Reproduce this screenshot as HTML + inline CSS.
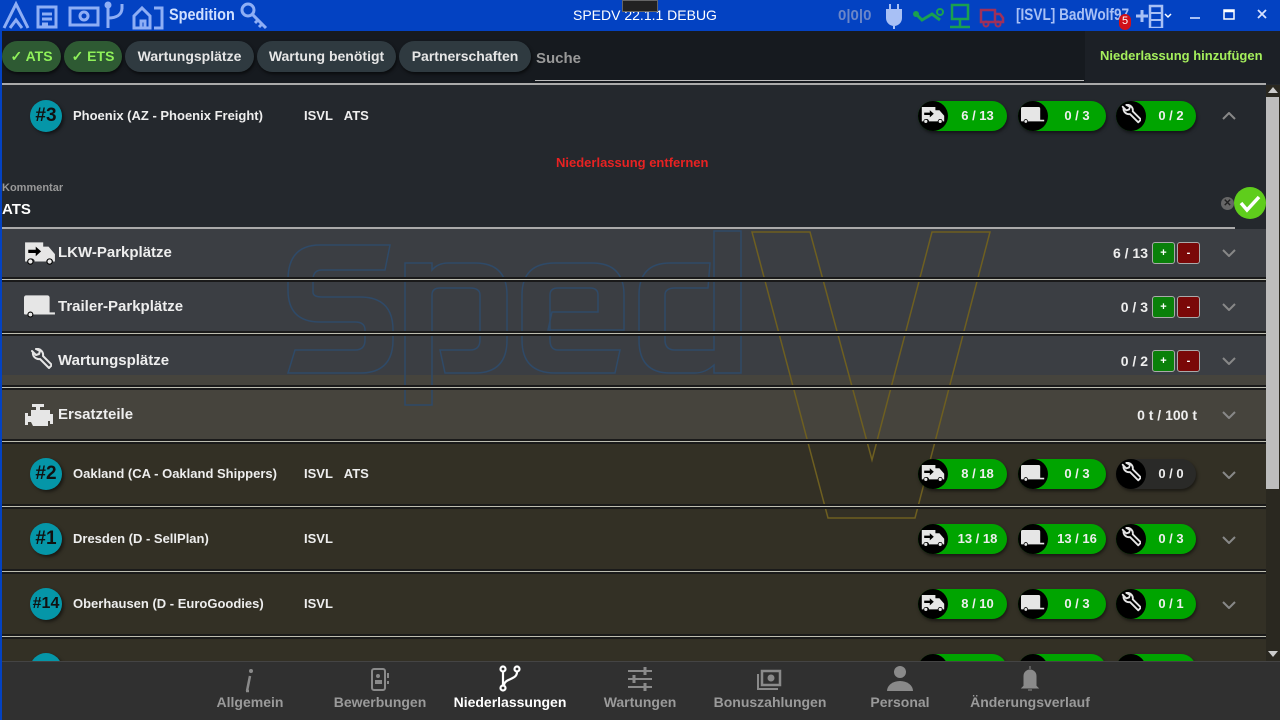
<!DOCTYPE html>
<html><head><meta charset="utf-8">
<style>
*{box-sizing:border-box;margin:0;padding:0}
body{width:1280px;height:720px;overflow:hidden;background:#23272c;font-family:"Liberation Sans",sans-serif;position:relative;color:#eee}
.a{position:absolute}
.t{font-weight:bold;white-space:nowrap}
.title{left:0;top:0;width:1280px;height:31px;background:#0342c2}
.chip{position:absolute;top:41px;height:31px;border-radius:16px;background:#2f3a40;color:#e6e6e6;font-weight:bold;font-size:14px;line-height:31px;text-align:center;box-shadow:1px 2px 3px rgba(0,0,0,.6)}
.chip.g{background:#2e5a33;color:#8ff05a}
.sep{position:absolute;left:0;width:1266px;height:5px;border-top:2px solid #1a1a1a;border-bottom:2px solid #1a1a1a;background:#bdbdb0}
.badge{position:absolute;left:30px;width:32px;height:32px;border-radius:50%;background:#0596a8;color:#111;font-size:19px;line-height:32px;text-align:center;box-shadow:2px 2px 3px rgba(0,0,0,.5)}
.name{position:absolute;left:73px;font-size:13px;font-weight:bold;color:#eee}
.tag{position:absolute;left:304px;font-size:13px;font-weight:bold;color:#eee;word-spacing:8px}
.pill{position:absolute;height:30px;border-radius:15px;background:#00a400;color:#eee;font-weight:bold;font-size:13px;line-height:30px;box-shadow:1px 2px 3px rgba(0,0,0,.5)}
.pill.dark{background:#2a2a28}
.pill .c{position:absolute;left:0;top:0;width:30px;height:30px;border-radius:50%;background:#000}
.pill .c svg{position:absolute;left:3px;top:4px}
.pill span{position:absolute;left:30px;right:0;text-align:center}
.chev{position:absolute;left:1222px;width:14px;height:8px}
.sub{position:absolute;left:58px;font-size:15px;font-weight:bold;color:#eee}
.val{position:absolute;right:132px;font-size:14px;font-weight:bold;color:#eee}
.btn{position:absolute;width:23px;height:22px;border:1px solid #aaa;border-radius:3px;font-size:11px;line-height:20px;text-align:center;color:#fff;font-weight:bold}
.nav{position:absolute;top:694px;font-size:14px;font-weight:bold;color:#9a9a9a;width:140px;text-align:center}
</style></head><body>
<svg width="0" height="0" style="position:absolute">
<defs>
<symbol id="truck" viewBox="0 0 30 22"><path d="M1 1h17v4h5l6 7v7h-2a3 3 0 0 0-6 0h-11a3 3 0 0 0-6 0h-3z" fill="#e6e6e6"/><circle cx="6" cy="19" r="2.5" fill="#e6e6e6" stroke="#000" stroke-width="1"/><circle cx="24" cy="19" r="2.5" fill="#e6e6e6" stroke="#000" stroke-width="1"/><path d="M4 8h7v-3l5 4.5-5 4.5v-3h-7z" fill="#000"/></symbol>
<symbol id="trailer" viewBox="0 0 30 22"><path d="M3 1h19a2 2 0 0 1 2 2v14h5v2h-21a2 2 0 0 0-4 0h-3a1 1 0 0 1-1-1v-15a2 2 0 0 1 2-2z" fill="#e6e6e6"/><circle cx="6" cy="19" r="2.3" fill="#e6e6e6" stroke="#000" stroke-width="1"/></symbol>
<symbol id="wrench" viewBox="0 0 24 24"><path d="M4 3l4 4 3-1 1-3-4-2a6 6 0 0 1 7 7l9 9-3 3-9-9a6 6 0 0 1-7-7z" fill="none" stroke="#e6e6e6" stroke-width="2" stroke-linejoin="round"/></symbol>
<symbol id="chev" viewBox="0 0 14 8"><path d="M1 1l6 6 6-6" fill="none" stroke="#888" stroke-width="2"/></symbol>
</defs></svg>

<!-- title bar -->
<div class="a title"></div>
<svg class="a" style="left:0;top:0" width="280" height="31">
<g fill="none" stroke="#8eaef5" stroke-width="3">
<path d="M4 28L16 4 28 28M10 28l6-8 6 8"/>
<rect x="38" y="7" width="18" height="20"/><path d="M42 14h10M42 19h10M42 24h6"/>
<rect x="70" y="8" width="28" height="17"/><circle cx="84" cy="16" r="4"/>
<path d="M108 4v24M108 18c8 0 14-3 14-10M122 4v5"/><circle cx="108" cy="5" r="2"/>
<path d="M134 28V16l8-8 8 8v12zM141 28v-7h4v7"/><path d="M154 8h8v20h-8" />
<circle cx="248" cy="10" r="6"/><path d="M252 14l14 14M258 20l-3 3M262 24l-3 3"/>
</g>
</svg>
<div class="a t" style="left:169px;top:5px;font-size:17px;color:#d0e0ff;transform:scaleX(.85);transform-origin:left">Spedition</div>
<div class="a" style="left:573px;top:7px;font-size:14px;color:#fff">SPEDV 22.1.1 DEBUG</div>
<div class="a" style="left:622px;top:0;width:36px;height:12px;background:#222;border:1px solid #666"></div>
<div class="a t" style="left:838px;top:7px;font-size:15px;color:#6b86c8">0|0|0</div>
<svg class="a" style="left:880px;top:2px" width="140" height="28">
<path d="M10 2v6M18 2v6M7 8h14v8a7 7 0 0 1-14 0zM14 22v5" fill="#a8c0f5" stroke="#a8c0f5" stroke-width="2"/>
<path d="M36 12l6 6 10-6 8 6" fill="none" stroke="#1aa050" stroke-width="3"/><circle cx="36" cy="12" r="3" fill="#1aa050"/><circle cx="60" cy="10" r="3" fill="none" stroke="#1aa050" stroke-width="2"/>
<rect x="72" y="3" width="16" height="14" fill="none" stroke="#1aa050" stroke-width="2.5"/><path d="M80 17v7M70 25h20" stroke="#1aa050" stroke-width="2.5"/>
<path d="M101 8h14v12h-14zM115 12h5l3 4v4h-8" fill="none" stroke="#a0305a" stroke-width="2.5"/><circle cx="106" cy="22" r="2.5" fill="none" stroke="#a0305a" stroke-width="2"/><circle cx="118" cy="22" r="2.5" fill="none" stroke="#a0305a" stroke-width="2"/>
</svg>
<div class="a t" style="left:1016px;top:5px;font-size:17px;color:#a8c0f5;transform:scaleX(.8);transform-origin:left">[ISVL] BadWolf97</div>
<div class="a" style="left:1119px;top:14px;width:12px;height:16px;border-radius:6px;background:#d0101a;color:#fff;font-size:11px;text-align:center;line-height:15px">5</div>
<svg class="a" style="left:1132px;top:4px" width="150" height="24">
<path d="M4 12h12M10 6v12" stroke="#a8c0f5" stroke-width="3"/>
<rect x="18" y="2" width="12" height="22" fill="none" stroke="#a8c0f5" stroke-width="2.5"/><path d="M18 9h12M18 16h12" stroke="#a8c0f5" stroke-width="2"/>
<path d="M33 10l3 3 3-3" fill="none" stroke="#fff" stroke-width="1.5"/>
<path d="M58 14h10" stroke="#a8c0f5" stroke-width="2"/>
<rect x="92" y="6" width="10" height="9" fill="none" stroke="#fff" stroke-width="1.5"/><path d="M92 7h10" stroke="#fff" stroke-width="2.5"/>
<path d="M126 6l8 8M134 6l-8 8" stroke="#d8e2ff" stroke-width="1.8"/>
</svg>

<!-- filter bar -->
<div class="a" style="left:0;top:31px;width:1085px;height:53px;background:#161a1f"></div>
<div class="a" style="left:1085px;top:31px;width:195px;height:53px;background:#1c2026"></div>
<div class="chip g" style="left:2px;width:59px">✓ ATS</div>
<div class="chip g" style="left:64px;width:58px">✓ ETS</div>
<div class="chip" style="left:125px;width:129px">Wartungsplätze</div>
<div class="chip" style="left:257px;width:139px">Wartung benötigt</div>
<div class="chip" style="left:399px;width:132px">Partnerschaften</div>
<div class="a t" style="left:536px;top:50px;font-size:15px;color:#999">Suche</div>
<div class="a" style="left:535px;top:80px;width:549px;height:1px;background:#bbb"></div>
<div class="a t" style="left:1100px;top:48px;font-size:13px;color:#a5ef5c">Niederlassung hinzufügen</div>
<div class="a" style="left:0;top:83px;width:1266px;height:2px;background:#aaa"></div>

<!-- content backgrounds -->
<div class="a" style="left:0;top:85px;width:1266px;height:144px;background:#24282d"></div>
<div class="a" style="left:0;top:229px;width:1266px;height:146px;background:#3b3e43"></div>
<div class="a" style="left:0;top:375px;width:1266px;height:66px;background:#46443d"></div>
<div class="a" style="left:0;top:441px;width:1266px;height:220px;background:#333025"></div>

<!-- watermark -->
<svg class="a" style="left:0;top:0" width="1266" height="661">
<g fill="none" stroke="#2f4a68" stroke-width="1.5">
<path d="M320 245L390 245 385 270 322 270Q313 270 313 280L313 292Q313 297 322 297L360 297Q393 297 393 330L393 340Q393 373 360 373L288 373 295 350 355 350Q365 350 365 340L365 330Q365 322 355 322L320 322Q288 322 288 290L288 280Q288 245 320 245Z"/>
<path d="M405 263L432 263 432 270Q438 263 448 263L475 263Q507 263 507 295L507 340Q507 373 475 373L445 373 440 350 470 350Q480 350 480 340L480 295Q480 288 470 288L440 288Q432 288 432 295L432 405 405 405Z"/>
<path d="M555 263L592 263Q624 263 624 295L624 330 548 330 552 312 598 312 598 295Q598 288 590 288L558 288Q550 288 550 295L550 340Q550 350 558 350L620 350 615 373 555 373Q522 373 522 340L522 295Q522 263 555 263Z"/>
<path d="M714 231L741 231 741 373 714 373 714 365Q705 373 695 373L670 373Q639 373 639 340L639 295Q639 263 670 263L710 263 708 288 675 288Q665 288 665 295L665 340Q665 350 675 350L714 350Z"/>
</g>
<path d="M752 232L810 232 872 460 932 232 990 232 915 518 828 518Z" fill="none" stroke="#6e5f20" stroke-width="1.5"/>
</svg>

<!-- Phoenix -->
<div class="badge t" style="top:100px">#3</div>
<div class="name" style="top:108px">Phoenix (AZ - Phoenix Freight)</div>
<div class="tag" style="top:108px">ISVL ATS</div>
<div class="pill" style="left:918px;top:101px;width:89px"><div class="c"><svg width="24" height="20"><use href="#truck"/></svg></div><span>6 / 13</span></div>
<div class="pill" style="left:1018px;top:101px;width:88px"><div class="c"><svg width="24" height="20"><use href="#trailer"/></svg></div><span>0 / 3</span></div>
<div class="pill" style="left:1116px;top:101px;width:80px"><div class="c"><svg width="22" height="22" style="top:3px"><use href="#wrench"/></svg></div><span>0 / 2</span></div>
<svg class="chev" style="top:112px;transform:rotate(180deg)"><use href="#chev"/></svg>
<div class="a t" style="left:556px;top:155px;font-size:13px;color:#e82222">Niederlassung entfernen</div>
<div class="a t" style="left:2px;top:182px;font-size:11px;color:#999">Kommentar</div>
<div class="a t" style="left:2px;top:201px;font-size:15px;color:#fff">ATS</div>
<div class="a" style="left:1221px;top:197px;width:13px;height:13px;border-radius:50%;background:#666;color:#222;font-size:10px;line-height:13px;text-align:center;font-weight:bold">✕</div>
<svg class="a" style="left:1234px;top:187px" width="32" height="32"><circle cx="16" cy="16" r="16" fill="#5fcd1c"/><path d="M7 16l6 7 12-13" fill="none" stroke="#fff" stroke-width="3.5"/></svg>
<div class="a" style="left:0;top:227px;width:1235px;height:2px;background:#aaa"></div>

<!-- sub rows -->
<svg class="a" style="left:24px;top:241px" width="32" height="24"><use href="#truck"/></svg>
<div class="sub" style="top:244px">LKW-Parkplätze</div>
<div class="val" style="top:245px">6 / 13</div>
<div class="btn" style="left:1152px;top:242px;background:#0a800a">+</div>
<div class="btn" style="left:1177px;top:242px;background:#7a0808">-</div>
<svg class="chev" style="top:249px"><use href="#chev"/></svg>
<div class="sep" style="top:277px"></div>

<svg class="a" style="left:24px;top:294px" width="32" height="24"><use href="#trailer"/></svg>
<div class="sub" style="top:298px">Trailer-Parkplätze</div>
<div class="val" style="top:299px">0 / 3</div>
<div class="btn" style="left:1152px;top:296px;background:#0a800a">+</div>
<div class="btn" style="left:1177px;top:296px;background:#7a0808">-</div>
<svg class="chev" style="top:303px"><use href="#chev"/></svg>
<div class="sep" style="top:331px"></div>

<svg class="a" style="left:28px;top:348px" width="24" height="24"><use href="#wrench"/></svg>
<div class="sub" style="top:352px">Wartungsplätze</div>
<div class="val" style="top:353px">0 / 2</div>
<div class="btn" style="left:1152px;top:350px;background:#0a800a">+</div>
<div class="btn" style="left:1177px;top:350px;background:#7a0808">-</div>
<svg class="chev" style="top:357px"><use href="#chev"/></svg>
<div class="sep" style="top:385px"></div>

<svg class="a" style="left:24px;top:403px" width="32" height="24"><path d="M8 1h12v3h-4v3h10v4h3v10h-3v-3h-2v5h-15l-2-4h-3v3h-3v-12h3v3h3v-6h5v-3h-4z" fill="#e6e6e6"/></svg>
<div class="sub" style="top:406px">Ersatzteile</div>
<div class="val" style="top:407px;right:83px">0 t / 100 t</div>
<svg class="chev" style="top:411px"><use href="#chev"/></svg>
<div class="sep" style="top:439px"></div>

<!-- Oakland -->
<div class="badge t" style="top:458px">#2</div>
<div class="name" style="top:466px">Oakland (CA - Oakland Shippers)</div>
<div class="tag" style="top:466px">ISVL ATS</div>
<div class="pill" style="left:918px;top:459px;width:89px"><div class="c"><svg width="24" height="20"><use href="#truck"/></svg></div><span>8 / 18</span></div>
<div class="pill" style="left:1018px;top:459px;width:88px"><div class="c"><svg width="24" height="20"><use href="#trailer"/></svg></div><span>0 / 3</span></div>
<div class="pill dark" style="left:1116px;top:459px;width:80px"><div class="c"><svg width="22" height="22" style="top:3px"><use href="#wrench"/></svg></div><span>0 / 0</span></div>
<svg class="chev" style="top:471px"><use href="#chev"/></svg>
<div class="sep" style="top:504px"></div>

<!-- Dresden -->
<div class="badge t" style="top:523px">#1</div>
<div class="name" style="top:531px">Dresden (D - SellPlan)</div>
<div class="tag" style="top:531px">ISVL</div>
<div class="pill" style="left:918px;top:524px;width:89px"><div class="c"><svg width="24" height="20"><use href="#truck"/></svg></div><span>13 / 18</span></div>
<div class="pill" style="left:1018px;top:524px;width:88px"><div class="c"><svg width="24" height="20"><use href="#trailer"/></svg></div><span>13 / 16</span></div>
<div class="pill" style="left:1116px;top:524px;width:80px"><div class="c"><svg width="22" height="22" style="top:3px"><use href="#wrench"/></svg></div><span>0 / 3</span></div>
<svg class="chev" style="top:536px"><use href="#chev"/></svg>
<div class="sep" style="top:569px"></div>

<!-- Oberhausen -->
<div class="badge t" style="top:588px;font-size:16px">#14</div>
<div class="name" style="top:596px">Oberhausen (D - EuroGoodies)</div>
<div class="tag" style="top:596px">ISVL</div>
<div class="pill" style="left:918px;top:589px;width:89px"><div class="c"><svg width="24" height="20"><use href="#truck"/></svg></div><span>8 / 10</span></div>
<div class="pill" style="left:1018px;top:589px;width:88px"><div class="c"><svg width="24" height="20"><use href="#trailer"/></svg></div><span>0 / 3</span></div>
<div class="pill" style="left:1116px;top:589px;width:80px"><div class="c"><svg width="22" height="22" style="top:3px"><use href="#wrench"/></svg></div><span>0 / 1</span></div>
<svg class="chev" style="top:601px"><use href="#chev"/></svg>
<div class="sep" style="top:634px"></div>

<div class="badge" style="top:653px"></div>
<div class="pill" style="left:918px;top:654px;width:89px"><div class="c"></div></div>
<div class="pill" style="left:1018px;top:654px;width:88px"><div class="c"></div></div>
<div class="pill" style="left:1116px;top:654px;width:80px"><div class="c"></div></div>

<!-- scrollbar -->
<div class="a" style="left:1266px;top:85px;width:14px;height:576px;background:#2a2820"></div>
<div class="a" style="left:1266px;top:97px;width:13px;height:392px;background:#bdbdbd"></div>
<div class="a" style="left:1268px;top:87px;width:0;height:0;border-left:5px solid transparent;border-right:5px solid transparent;border-bottom:6px solid #ccc"></div>
<div class="a" style="left:1268px;top:651px;width:0;height:0;border-left:5px solid transparent;border-right:5px solid transparent;border-top:6px solid #ccc"></div>

<!-- bottom nav -->
<div class="a" style="left:0;top:661px;width:1280px;height:59px;background:#303030;border-top:1px solid #444"></div>
<div class="a" style="left:0;top:31px;width:2px;height:689px;background:#0342c2"></div>
<svg class="a" style="left:0;top:664px" width="1280" height="30">
<g fill="#8a8a8a" stroke="#8a8a8a">
<circle cx="251" cy="7" r="2" stroke="none"/><path d="M250 12l-3 15M246 27h3" fill="none" stroke-width="2.5"/>
<rect x="372" y="5" width="13" height="21" rx="2" fill="none" stroke-width="2"/><circle cx="378" cy="12" r="2" stroke="none"/><rect x="375" y="16" width="7" height="4" stroke="none"/><path d="M388 9v5M388 17v3" stroke-width="2"/>
<path d="M628 7h24M628 15h24M628 23h24" stroke-width="2"/><path d="M645 3v8M634 11v8M645 19v8" stroke-width="3"/>
<rect x="762" y="7" width="18" height="14" fill="none" stroke-width="2.5"/><circle cx="771" cy="14" r="3.5" stroke="none"/><path d="M758 10v15h20" fill="none" stroke-width="2"/>
<circle cx="900" cy="8" r="6" stroke="none"/><path d="M887 27a13 10 0 0 1 26 0z" stroke="none"/>
<path d="M1024 22v-10a6 6 0 0 1 12 0v10l2 2h-16zM1030 2v3M1028 26h4" stroke-width="1"/>
</g>
<g fill="none" stroke="#fff" stroke-width="2.2"><circle cx="503" cy="5" r="2.5"/><circle cx="503" cy="24" r="2.5"/><circle cx="517" cy="5" r="2.5"/><path d="M503 8v13M517 8c0 8-12 6-13 13"/></g>
</svg>
<div class="nav" style="left:180px">Allgemein</div>
<div class="nav" style="left:310px">Bewerbungen</div>
<div class="nav" style="left:440px;color:#fff">Niederlassungen</div>
<div class="nav" style="left:570px">Wartungen</div>
<div class="nav" style="left:700px">Bonuszahlungen</div>
<div class="nav" style="left:830px">Personal</div>
<div class="nav" style="left:960px">Änderungsverlauf</div>
</body></html>
